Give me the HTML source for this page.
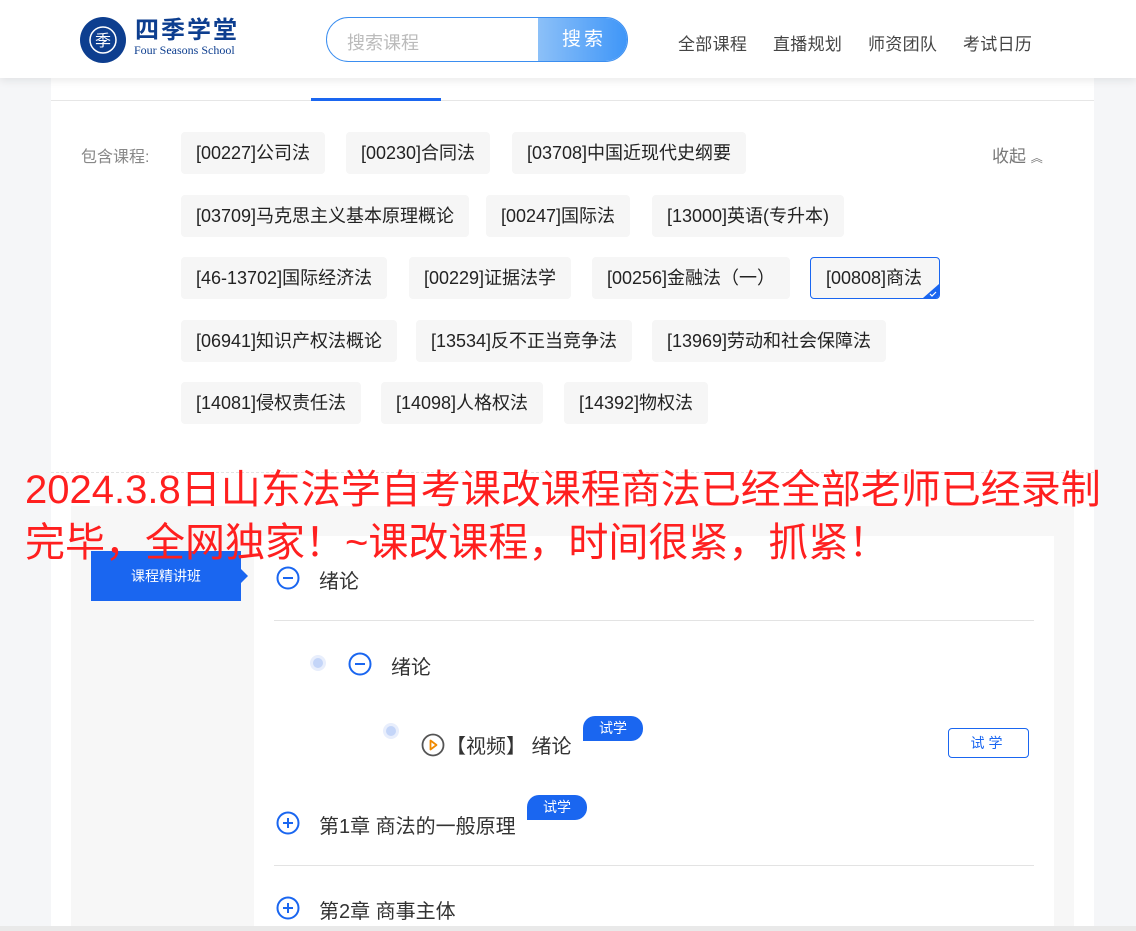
<!DOCTYPE html>
<html><head><meta charset="utf-8"><style>
*{margin:0;padding:0;box-sizing:border-box}
body{width:1136px;height:931px;overflow:hidden;background:#f5f6f8;font-family:"Liberation Sans","Noto Sans CJK SC",sans-serif;position:relative;color:#333}
.a{position:absolute}
.hdr{left:0;top:0;width:1136px;height:78px;background:#fff;box-shadow:0 3px 8px rgba(0,0,0,.08);z-index:2}
.nav{top:30px;font-size:17px;color:#444;letter-spacing:.3px}
.tag{position:absolute;height:42px;line-height:42px;background:#f6f6f6;border-radius:4px;padding:0 15px;font-size:18px;color:#222;white-space:nowrap}
.red{left:25px;font-size:40px;color:#ff1f1f;white-space:nowrap;line-height:53px;z-index:3}
.circ{position:absolute;width:24px;height:24px}
.badge{position:absolute;background:#1a66f0;color:#fff;font-size:14px;height:25px;line-height:24px;width:60px;text-align:center;border-radius:12px 12px 12px 0}
.t{position:absolute;font-size:20px;color:#333;white-space:nowrap}
</style></head><body>
<div class="a hdr">
  <svg class="a" style="left:79px;top:16px" width="48" height="48" viewBox="0 0 48 48"><circle cx="24" cy="24" r="23" fill="#0d3e8f"/><circle cx="24" cy="24" r="13" fill="none" stroke="#fff" stroke-width="1.5"/><text x="24" y="30" font-size="16" fill="#fff" text-anchor="middle" font-family="Noto Sans CJK SC">季</text></svg>
  <div class="a" style="left:135px;top:17px;font-size:24px;font-weight:bold;color:#0d3e8f;letter-spacing:2px;line-height:28px">四季学堂</div>
  <div class="a" style="left:134px;top:43px;font-size:12px;color:#0d3e8f;font-family:'Liberation Serif',serif">Four Seasons School</div>
  <div class="a" style="left:326px;top:17px;width:302px;height:45px;border:1px solid #3b8ef0;border-radius:23px;overflow:hidden;background:#fff">
    <div class="a" style="left:20px;top:11px;font-size:18px;color:#bbb">搜索课程</div>
    <div class="a" style="left:211px;top:0;width:91px;height:45px;background:linear-gradient(90deg,#8cc0f8,#3d95f8);color:#fff;font-size:19px;line-height:43px;padding-left:24px;letter-spacing:3px">搜索</div>
  </div>
  <div class="a nav" style="left:678px">全部课程</div>
  <div class="a nav" style="left:773px">直播规划</div>
  <div class="a nav" style="left:868px">师资团队</div>
  <div class="a nav" style="left:963px">考试日历</div>
</div>
<div class="a" style="left:51px;top:78px;width:1043px;height:853px;background:#fff"></div>
<div class="a" style="left:51px;top:100px;width:1043px;height:1px;background:#e6e6e6"></div>
<div class="a" style="left:311px;top:98px;width:130px;height:3px;background:#1a66f0"></div>
<div class="a" style="left:81px;top:143px;font-size:16px;color:#888">包含课程:</div>
<div class="a" style="left:992px;top:142px;font-size:17px;color:#777">收起 <span style="font-size:12px">︽</span></div>
<div class="tag" style="left:181px;top:132px">[00227]公司法</div>
<div class="tag" style="left:346px;top:132px">[00230]合同法</div>
<div class="tag" style="left:512px;top:132px">[03708]中国近现代史纲要</div>
<div class="tag" style="left:181px;top:195px">[03709]马克思主义基本原理概论</div>
<div class="tag" style="left:486px;top:195px">[00247]国际法</div>
<div class="tag" style="left:652px;top:195px">[13000]英语(专升本)</div>
<div class="tag" style="left:181px;top:257px">[46-13702]国际经济法</div>
<div class="tag" style="left:409px;top:257px">[00229]证据法学</div>
<div class="tag" style="left:592px;top:257px">[00256]金融法（一）</div>
<div class="tag" style="left:810px;top:257px;border:1px solid #1a66f0;line-height:40px;width:130px;overflow:hidden">[00808]商法<svg class="a" style="right:0;bottom:0" width="16" height="14"><polygon points="16,0 16,14 0,14" fill="#1a66f0"/><path d="M7 10 l2 2 l4-4" stroke="#fff" stroke-width="1.2" fill="none"/></svg></div>
<div class="tag" style="left:181px;top:320px">[06941]知识产权法概论</div>
<div class="tag" style="left:416px;top:320px">[13534]反不正当竞争法</div>
<div class="tag" style="left:652px;top:320px">[13969]劳动和社会保障法</div>
<div class="tag" style="left:181px;top:382px">[14081]侵权责任法</div>
<div class="tag" style="left:381px;top:382px">[14098]人格权法</div>
<div class="tag" style="left:564px;top:382px">[14392]物权法</div>
<div class="a" style="left:51px;top:472px;width:1043px;border-top:1px dashed #e2e2e2"></div>
<div class="a" style="left:71px;top:506px;width:1003px;height:425px;background:#f7f7f7"></div>
<div class="a" style="left:254px;top:536px;width:800px;height:395px;background:#fff"></div>
<div class="a" style="left:91px;top:551px;width:150px;height:50px;background:#1a66f0;color:#fff;font-size:14px;line-height:50px;text-align:center">课程精讲班</div>
<div class="a" style="left:241px;top:569px;width:0;height:0;border-top:7px solid transparent;border-bottom:7px solid transparent;border-left:7px solid #1a66f0"></div>
<div class="a red" style="top:464px">2024.3.8日山东法学自考课改课程商法已经全部老师已经录制</div>
<div class="a red" style="top:517px">完毕，全网独家！~课改课程，时间很紧，抓紧！</div>
<svg class="circ" style="left:276px;top:566px" viewBox="0 0 24 24"><circle cx="12" cy="12" r="10.5" fill="none" stroke="#1a66f0" stroke-width="2"/><path d="M7 12h10" stroke="#1a66f0" stroke-width="2"/></svg>
<div class="t" style="left:319px;top:565px">绪论</div>
<div class="a" style="left:274px;top:620px;width:760px;height:1px;background:#e3e3e3"></div>
<div class="a" style="left:310px;top:655px;width:16px;height:16px;border-radius:50%;background:#e8eefc"></div>
<div class="a" style="left:313px;top:658px;width:10px;height:10px;border-radius:50%;background:#c4d5f8"></div>
<svg class="circ" style="left:348px;top:652px" viewBox="0 0 24 24"><circle cx="12" cy="12" r="10.5" fill="none" stroke="#1a66f0" stroke-width="2"/><path d="M7 12h10" stroke="#1a66f0" stroke-width="2"/></svg>
<div class="t" style="left:391px;top:651px">绪论</div>
<div class="a" style="left:383px;top:723px;width:16px;height:16px;border-radius:50%;background:#e8eefc"></div>
<div class="a" style="left:386px;top:726px;width:10px;height:10px;border-radius:50%;background:#c4d5f8"></div>
<svg class="a" style="left:421px;top:733px" width="24" height="24" viewBox="0 0 24 24"><circle cx="12" cy="12" r="10.5" fill="none" stroke="#555" stroke-width="1.8"/><path d="M9.5 7.5l6 4.5-6 4.5z" fill="none" stroke="#f08a00" stroke-width="1.8" stroke-linejoin="round"/></svg>
<div class="t" style="left:446px;top:730px">【视频】 绪论</div>
<div class="badge" style="left:583px;top:716px">试学</div>
<div class="a" style="left:948px;top:728px;width:81px;height:30px;border:1px solid #1a66f0;border-radius:4px;color:#1a66f0;font-size:14px;text-align:center;line-height:28px;letter-spacing:4px">试学</div>
<svg class="circ" style="left:276px;top:811px" viewBox="0 0 24 24"><circle cx="12" cy="12" r="10.5" fill="none" stroke="#1a66f0" stroke-width="2"/><path d="M7 12h10M12 7v10" stroke="#1a66f0" stroke-width="2"/></svg>
<div class="t" style="left:319px;top:810px">第1章 商法的一般原理</div>
<div class="badge" style="left:527px;top:795px">试学</div>
<div class="a" style="left:274px;top:865px;width:760px;height:1px;background:#e3e3e3"></div>
<svg class="circ" style="left:276px;top:896px" viewBox="0 0 24 24"><circle cx="12" cy="12" r="10.5" fill="none" stroke="#1a66f0" stroke-width="2"/><path d="M7 12h10M12 7v10" stroke="#1a66f0" stroke-width="2"/></svg>
<div class="t" style="left:319px;top:895px">第2章 商事主体</div>
<div class="a" style="left:0;top:926px;width:1136px;height:5px;background:#e9e9e9"></div>
</body></html>
